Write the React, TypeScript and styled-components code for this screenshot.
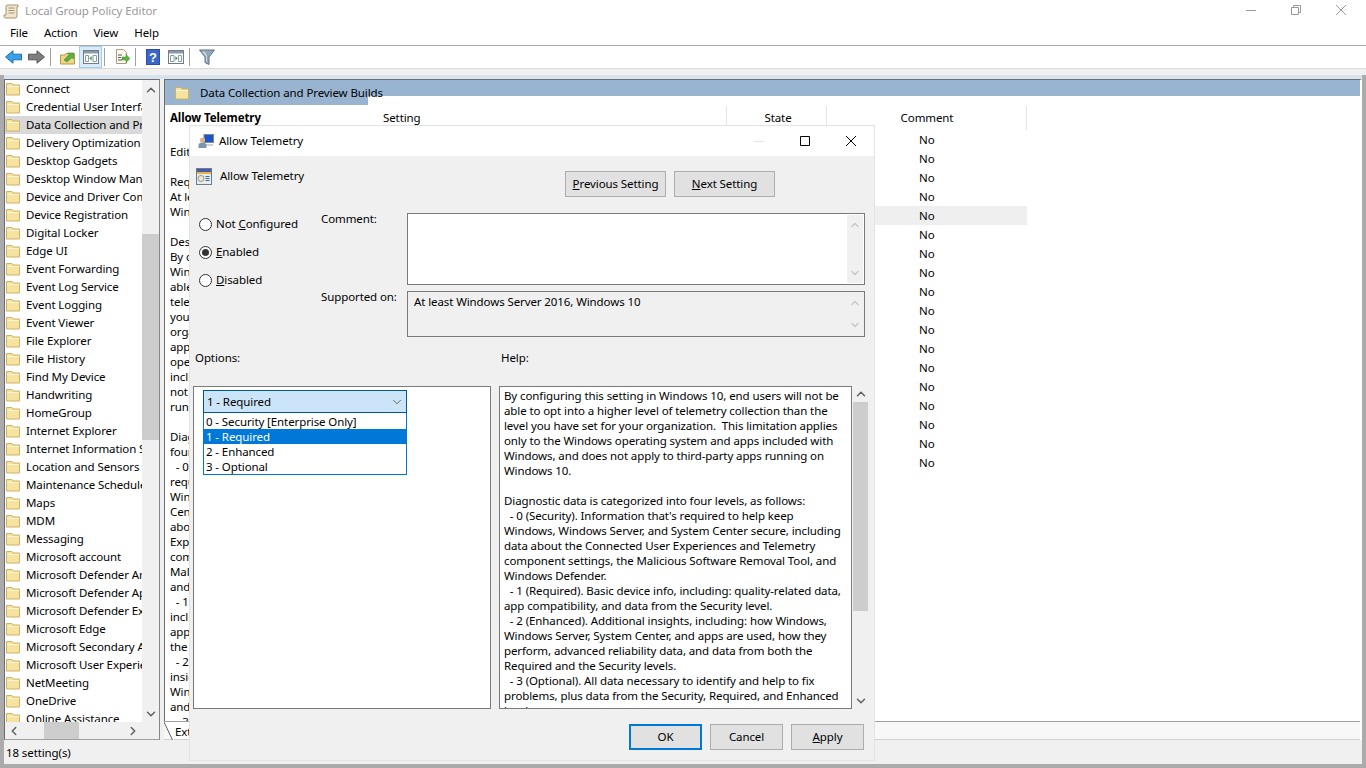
import styled, { createGlobalStyle } from "styled-components";
import { ChevronUp, ChevronDown, ChevronLeft, ChevronRight } from "lucide-react";

const FONT = `"Noto Sans", "Open Sans", sans-serif`;

const folders = [
  "Connect", "Credential User Interface", "Data Collection and Preview Builds", "Delivery Optimization",
  "Desktop Gadgets", "Desktop Window Manager", "Device and Driver Compatibility", "Device Registration",
  "Digital Locker", "Edge UI", "Event Forwarding", "Event Log Service", "Event Logging", "Event Viewer",
  "File Explorer", "File History", "Find My Device", "Handwriting", "HomeGroup", "Internet Explorer",
  "Internet Information Services", "Location and Sensors", "Maintenance Scheduler", "Maps", "MDM", "Messaging",
  "Microsoft account", "Microsoft Defender Antivirus", "Microsoft Defender Application Guard",
  "Microsoft Defender Exploit Guard", "Microsoft Edge", "Microsoft Secondary Authentication Factor",
  "Microsoft User Experience Virtualization", "NetMeeting", "OneDrive", "Online Assistance",
];

const extendedLines = [
  "", "Edit policy setting", "", "Requirements:", "At least Windows Server 2016,", "Windows 10", "",
  "Description:", "By configuring this setting in", "Windows 10, end users will not be",
  "able to opt into a higher level of", "telemetry collection than the level", "you have set for your",
  "organization.  This limitation", "applies only to the Windows", "operating system and apps",
  "included with Windows, and does", "not apply to third-party apps", "running on Windows 10.", "",
  "Diagnostic data is categorized into", "four levels, as follows:", "  - 0 (Security). Information that's",
  "required to help keep Windows,", "Windows Server, and System", "Center secure, including data",
  "about the Connected User", "Experiences and Telemetry", "component settings, the",
  "Malicious Software Removal Tool,", "and Windows Defender.", "  - 1 (Required). Basic device info,",
  "including: quality-related data,", "app compatibility, and data from", "the Security level.",
  "  - 2 (Enhanced). Additional", "insights, including: how Windows,", "Windows Server, System Center,",
  "and apps are used, how they", "  - 3 (Optional).",
];

const helpText = `By configuring this setting in Windows 10, end users will not be
able to opt into a higher level of telemetry collection than the
level you have set for your organization.  This limitation applies
only to the Windows operating system and apps included with
Windows, and does not apply to third-party apps running on
Windows 10.

Diagnostic data is categorized into four levels, as follows:
  - 0 (Security). Information that's required to help keep
Windows, Windows Server, and System Center secure, including
data about the Connected User Experiences and Telemetry
component settings, the Malicious Software Removal Tool, and
Windows Defender.
  - 1 (Required). Basic device info, including: quality-related data,
app compatibility, and data from the Security level.
  - 2 (Enhanced). Additional insights, including: how Windows,
Windows Server, System Center, and apps are used, how they
perform, advanced reliability data, and data from both the
Required and the Security levels.
  - 3 (Optional). All data necessary to identify and help to fix
problems, plus data from the Security, Required, and Enhanced
levels.`;

const Global = createGlobalStyle`
  html, body { margin: 0; padding: 0; height: 100%; overflow: hidden; background: #fff; }
  body { font-family: ${FONT}; font-size: 11.5px; letter-spacing: -0.1px; color: #000; }
  * { box-sizing: border-box; }
`;

const Page = styled.div`
  position: relative;
  width: 1366px;
  height: 768px;
  display: flex;
  flex-direction: column;
  overflow: hidden;
  background: #f0f0f0;
`;
const TitleBar = styled.div`
  height: 23px;
  flex: none;
  background: #fff;
  display: flex;
  align-items: center;
  padding-left: 3px;
  color: #999;
`;
const TitleText = styled.span`
  margin: 0 0 2px 6px;
  flex: 1;
`;
const WinButtons = styled.div`
  display: flex;
  align-items: flex-start;
  gap: 35px;
  height: 23px;
  padding-top: 5px;
  margin-right: 20px;
`;
const MenuBar = styled.div`
  height: 23px;
  flex: none;
  background: #fff;
  display: flex;
  align-items: center;
  gap: 16px;
  padding: 0 0 3px 10px;
  border-bottom: 1px solid #ababab;
`;
const ToolBar = styled.div`
  height: 23px;
  flex: none;
  background: #fff;
  display: flex;
  align-items: center;
  padding-left: 2px;
  border-bottom: 1px solid #d8d8d8;
`;
const ToolButton = styled.div<{ $active?: boolean }>`
  width: 23px;
  height: 22px;
  display: flex;
  align-items: center;
  justify-content: center;
  background: ${(p) => (p.$active ? "#d9ebf9" : "transparent")};
  border: 1px solid ${(p) => (p.$active ? "#a6cdec" : "transparent")};
`;
const ToolSep = styled.div`
  width: 1px;
  height: 18px;
  background: #a0a0a0;
  margin: 0 5px 0 2px;
`;
const Band = styled.div`
  height: 6px;
  flex: none;
  background: #f0f0f0;
`;
const ChildFrame = styled.div`
  flex: 1;
  min-height: 0;
  display: flex;
  flex-direction: column;
  border: solid #ababab;
  border-width: 0 4px 4px;
`;
const BlueBand = styled.div`
  height: 4px;
  flex: none;
  background: #d6e4f0;
`;
const Main = styled.div`
  flex: 1;
  min-height: 0;
  display: flex;
  background: #f0f0f0;
`;
const TreePane = styled.div`
  width: 156px;
  flex: none;
  display: flex;
  flex-direction: column;
  background: #fff;
  border: 1px solid #6d6d6d;
  border-right-color: #828790;
  border-bottom-color: #a0a0a0;
`;
const TreeBody = styled.div`
  flex: 1;
  min-height: 0;
  display: flex;
`;
const TreeList = styled.div`
  flex: 1;
  min-width: 0;
  overflow: hidden;
`;
const TreeRow = styled.div<{ $selected?: boolean }>`
  height: 18px;
  display: flex;
  align-items: center;
  gap: 6px;
  padding-left: 1px;
  white-space: nowrap;
  overflow: hidden;
  background: ${(p) => (p.$selected ? "#d9d9d9" : "transparent")};
`;
const TreeLabel = styled.span`
  margin-bottom: 2px;
`;
const VScroll = styled.div`
  width: 17px;
  flex: none;
  display: flex;
  flex-direction: column;
  align-items: center;
  padding: 3px 0 1px;
  background: #f0f0f0;
  color: #606060;
`;
const VThumb = styled.div`
  width: 17px;
  height: 206px;
  flex: none;
  margin: 137px 0 auto;
  background: #cdcdcd;
`;
const HScroll = styled.div`
  height: 17px;
  flex: none;
  display: flex;
  align-items: center;
  background: #f0f0f0;
  color: #606060;
  padding: 0 19px 0 2px;
`;
const HThumb = styled.div`
  width: 35px;
  height: 17px;
  margin-left: 23px;
  margin-right: auto;
  background: #cdcdcd;
`;
const Splitter = styled.div`
  width: 4px;
  flex: none;
`;
const DetailPane = styled.div`
  flex: 1;
  min-width: 0;
  display: flex;
  flex-direction: column;
  background: #fff;
  border: solid #6d6d6d;
  border-width: 1px 2px 0 1px;
  border-right-color: #fff;
`;
const DetailHead = styled.div`
  height: 25px;
  flex: none;
  background: linear-gradient(#99b4d1 16px, #fff 16px);
`;
const HeadTab = styled.div`
  width: 203px;
  height: 25px;
  display: flex;
  align-items: center;
  gap: 11px;
  padding-left: 10px;
  white-space: nowrap;
  background: linear-gradient(225deg, transparent 10px, #99b4d1 10px);
`;
const DetailBody = styled.div`
  flex: 1;
  min-height: 0;
  display: flex;
  overflow: hidden;
`;
const Extended = styled.div`
  width: 213px;
  flex: none;
  padding: 4px 0 0 5px;
  white-space: pre;
  overflow: hidden;
`;
const ExtTitle = styled.div`
  font-weight: 700;
  line-height: 18px;
  margin-bottom: 2px;
`;
const ExtLine = styled.div`
  height: 15px;
  line-height: 15px;
`;
const ListView = styled.div`
  flex: 1;
`;
const ListHead = styled.div`
  height: 24px;
  margin-top: 1px;
  display: flex;
`;
const HeadCell = styled.div<{ $w: number; $pad: number; $center?: boolean }>`
  width: ${(p) => p.$w}px;
  flex: none;
  line-height: 24px;
  padding-left: ${(p) => p.$pad}px;
  text-align: ${(p) => (p.$center ? "center" : "left")};
  border-right: 1px solid #e5e5e5;
`;
const ListRow = styled.div<{ $selected?: boolean }>`
  height: 19px;
  line-height: 19px;
  width: 649px;
  padding-left: 541px;
  background: ${(p) => (p.$selected ? "#efefef" : "transparent")};
`;
const TabStrip = styled.div`
  height: 19px;
  flex: none;
  display: flex;
  background: #f8f8f8;
  border-top: 1px solid #a0a0a0;
  border-bottom: 1px solid #d0d0d0;
  margin-left: -1px;
`;
const TabLabel = styled.div`
  width: 70px;
  padding-left: 1px;
  line-height: 19px;
  background: #fff;
`;
const StatusBar = styled.div`
  height: 24px;
  flex: none;
  background: #f0f0f0;
  padding: 1px 0 0 2px;
  line-height: 24px;
`;

/* dialog floats over the editor window */
const Dialog = styled.div`
  position: absolute;
  left: 189px;
  top: 125px;
  width: 686px;
  height: 636px;
  background: #f0f0f0;
  border: 1px solid #e3e3e3;
  display: flex;
  flex-direction: column;
`;
const DlgTitle = styled.div`
  height: 30px;
  flex: none;
  background: #fff;
  display: flex;
  align-items: center;
  padding-left: 8px;
  gap: 5px;
`;
const DlgTitleText = styled.span`
  flex: 1;
  margin-bottom: 2px;
`;
const DlgWinButtons = styled.div`
  display: flex;
  align-items: center;
  gap: 36px;
  margin-right: 18px;
`;
const DlgBody = styled.div`
  flex: 1;
  min-height: 0;
  display: flex;
  flex-direction: column;
  padding: 0 9px 0 3px;
`;
const TopRow = styled.div`
  height: 51px;
  flex: none;
  display: flex;
`;
const PolicyName = styled.div`
  width: 372px;
  display: flex;
  gap: 8px;
  padding: 12px 0 0 3px;
`;
const NavButtons = styled.div`
  display: flex;
  gap: 8px;
  padding-top: 15px;
`;
const Btn = styled.div<{ $w: number; $default?: boolean }>`
  width: ${(p) => p.$w}px;
  height: 26px;
  display: flex;
  align-items: center;
  justify-content: center;
  padding-bottom: 2px;
  white-space: pre;
  background: #e1e1e1;
  border: ${(p) => (p.$default ? "2px solid #0078d7" : "1px solid #adadad")};
`;
const Mnemonic = styled.span`
  text-decoration: underline;
`;
const MidRow = styled.div`
  height: 131px;
  flex: none;
  display: flex;
`;
const Radios = styled.div`
  width: 129px;
  display: flex;
  flex-direction: column;
  gap: 11px;
  padding: 9px 0 0 6px;
`;
const RadioRow = styled.div`
  height: 17px;
  display: flex;
  align-items: center;
  gap: 4px;
`;
const RadioLabel = styled.span`
  margin-bottom: 2px;
`;
const RadioDot = styled.div<{ $on?: boolean }>`
  width: 13px;
  height: 13px;
  border-radius: 50%;
  border: 1px solid #333;
  background: #fff;
  display: flex;
  align-items: center;
  justify-content: center;
  &::after {
    content: "";
    display: ${(p) => (p.$on ? "block" : "none")};
    width: 7px;
    height: 7px;
    border-radius: 50%;
    background: #333;
  }
`;
const Fields = styled.div`
  flex: 1;
  display: grid;
  grid-template-columns: 86px 458px;
  grid-template-rows: 72px 46px;
  row-gap: 6px;
  padding-top: 6px;
`;
const FieldLabel = styled.div<{ $shift: number }>`
  margin-top: ${(p) => p.$shift}px;
`;
const FieldBox = styled.div<{ $grey?: boolean }>`
  display: flex;
  justify-content: space-between;
  background: ${(p) => (p.$grey ? "#f0f0f0" : "#fff")};
  border: 1px solid #7a7a7a;
`;
const FieldText = styled.div`
  padding: 2px 6px;
`;
const FieldScroll = styled.div`
  width: 16px;
  margin: 1px;
  display: flex;
  flex-direction: column;
  justify-content: space-between;
  align-items: center;
  padding: 4px 0;
  background: #f0f0f0;
  color: #c4c4c4;
`;
const LabelRow = styled.div`
  height: 48px;
  flex: none;
  display: flex;
  padding: 12px 0 0 2px;
`;
const LabelLeft = styled.div`
  width: 306px;
`;
const PanesRow = styled.div`
  height: 323px;
  flex: none;
  display: flex;
  gap: 8px;
`;
const OptionsBox = styled.div`
  width: 298px;
  flex: none;
  background: #fff;
  border: 1px solid #7a7a7a;
`;
const ComboHead = styled.div`
  margin: 3px 0 0 9px;
  width: 204px;
  height: 23px;
  display: flex;
  align-items: center;
  justify-content: space-between;
  padding: 0 2px 0 3px;
  background: #cce4f7;
  border: 1px solid #005499;
`;
const ComboList = styled.div`
  margin-left: 9px;
  width: 204px;
  padding-top: 1px;
  background: #fff;
  border: 1px solid #0078d7;
  border-top: 0;
`;
const ComboItem = styled.div<{ $selected?: boolean }>`
  height: 15px;
  line-height: 15px;
  padding-left: 2px;
  color: ${(p) => (p.$selected ? "#fff" : "#000")};
  background: ${(p) => (p.$selected ? "#0078d7" : "transparent")};
`;
const HelpWrap = styled.div`
  width: 370px;
  flex: none;
  display: flex;
`;
const HelpBox = styled.div`
  width: 353px;
  flex: none;
  background: #fff;
  border: 1px solid #7a7a7a;
  padding: 1px 4px;
  white-space: pre;
  line-height: 15px;
  overflow: hidden;
`;
const HelpScroll = styled.div`
  width: 17px;
  flex: none;
  display: flex;
  flex-direction: column;
  align-items: center;
  padding: 1px 0;
  background: #f0f0f0;
  color: #606060;
`;
const HelpThumb = styled.div`
  flex: none;
  width: 15px;
  height: 209px;
  margin: 1px 0 auto;
  background: #cdcdcd;
`;
const Footer = styled.div`
  flex: 1;
  display: flex;
  justify-content: flex-end;
  gap: 8px;
  padding: 15px 1px 0 0;
`;

const FolderIcon = () => (
  <svg width="14" height="14" viewBox="0 0 14 14" style={{ flex: "none" }}>
    <path d="M.5 13V1.5h5.5l1 1.5h6.500v10z" fill="#f7e3a0" stroke="#cdb26a" />
    <path d="M1 4h12v1H1z" fill="#fdf6d4" />
  </svg>
);

const BackIcon = ({ color, flip }: { color: string; flip?: boolean }) => (
  <svg width="17" height="14" viewBox="0 0 17 14" style={{ transform: flip ? "scaleX(-1)" : undefined }}>
    <path d="M.5 7 8 .8v3.4h8.500v5.600H8v3.400z" fill={color} stroke={color === "#3aa1e8" ? "#1a6fb5" : "#555"} />
  </svg>
);

const PaneIcon = ({ flip }: { flip?: boolean }) => (
  <svg width="16" height="14" viewBox="0 0 16 14" style={{ transform: flip ? "scaleX(-1)" : undefined }}>
    <rect x=".5" y=".5" width="15" height="13" fill="#fff" stroke="#6d7d8c" />
    <rect x="1" y="1" width="14" height="2.500" fill="#8a9aa8" />
    <path d="M2.500 5.500h3v6h-3zM10 5.500h3.500v6H10z" fill="none" stroke="#8a9aa8" />
    <path d="M8.600 6v4.600L6.300 8.300z" fill="#3a9a3a" />
  </svg>
);

const UpFolderIcon = () => (
  <svg width="16" height="15" viewBox="0 0 16 15">
    <path d="M.5 5V14h14V3.500H6L5 5z" fill="#f0d688" stroke="#b59a45" />
    <path d="M4 10 9 4.500 7.500 3h6v6L12 7.500 7 12z" fill="#5fb040" stroke="#3d8a2a" strokeWidth=".6" />
  </svg>
);

const ExportIcon = () => (
  <svg width="16" height="16" viewBox="0 0 16 16">
    <path d="M2.500.5h7l3 3v11h-10z" fill="#fdfbf0" stroke="#a89d80" />
    <path d="M4 6h4M4 8.500h3M4 11h4" stroke="#555" />
    <path d="M8 8h4V5.500L16 9.500 12 13.500V11H8z" fill="#5db53c" stroke="#3d8a2a" strokeWidth=".5" />
  </svg>
);

const HelpIcon = () => (
  <svg width="14" height="16" viewBox="0 0 14 16">
    <rect width="14" height="16" fill="#2c4fa8" />
    <rect x="1" y="1" width="12" height="14" fill="#3b66c9" />
    <text x="7" y="13" fontSize="13" fontWeight="700" textAnchor="middle" fill="#fff" fontFamily="Liberation Sans">?</text>
  </svg>
);

const FilterIcon = () => (
  <svg width="16" height="16" viewBox="0 0 16 16">
    <path d="M.5 1h15L10 8v7.500L6 13.500V8z" fill="#8fa8ba" stroke="#5f7485" />
    <path d="M3 2.500h3L8 7v6L7 12.500V7.500z" fill="#c7d6e0" />
  </svg>
);

const ScrollIcon = () => (
  <svg width="16" height="16" viewBox="0 0 16 16">
    <path d="M4 1h11v2h-1v9a2 2 0 0 1-2 2H2a2 2 0 0 1-1-1.800V11h2V2z" fill="#f0e6cf" stroke="#a8936c" />
    <path d="M5.500 4h6M5.500 6.500h6M5.500 9h6" stroke="#a8936c" />
  </svg>
);

const ComputerIcon = () => (
  <svg width="16" height="16" viewBox="0 0 16 16">
    <rect x="6" y="1.500" width="9.500" height="8" fill="#1a55c8" stroke="#7b8a99" />
    <rect x="7" y="11" width="8" height="2" fill="#c9d0d6" />
    <circle cx="4.500" cy="7" r="2.600" fill="#d9b48a" />
    <path d="M.5 15v-2.500c0-2 1.500-3 4-3s4 1 4 3V15z" fill="#7a93b0" />
  </svg>
);

const PolicyIcon = () => (
  <svg width="16" height="17" viewBox="0 0 16 17">
    <rect x=".5" y=".5" width="15" height="16" fill="#e6ecef" stroke="#6b7f88" />
    <rect x="1" y="1" width="14" height="3" fill="#4a5aa8" />
    <rect x="1" y="4" width="14" height="2" fill="#e3b54a" />
    <circle cx="5" cy="10.500" r="3" fill="#f2e9c4" stroke="#8a9aa0" />
    <path d="M9.500 8.500h4M9.500 10.500h4M9.500 12.500h4" stroke="#3d6f8a" />
  </svg>
);

const MinGlyph = ({ color }: { color: string }) => (
  <svg width="10" height="10" viewBox="0 0 10 10">
    <path d="M0 5.500h10" stroke={color} />
  </svg>
);

const RestoreGlyph = () => (
  <svg width="10" height="10" viewBox="0 0 10 10" fill="none" stroke="#999">
    <path d="M.5 2.500h7v7h-7zM2.500 2.500v-2h7v7h-2" />
  </svg>
);

const MaxGlyph = () => (
  <svg width="10" height="10" viewBox="0 0 10 10" fill="none" stroke="#000">
    <path d="M.5.5h9v9h-9z" />
  </svg>
);

const CloseGlyph = ({ color }: { color: string }) => (
  <svg width="10" height="10" viewBox="0 0 10 10" fill="none" stroke={color}>
    <path d="M0 0l10 10M10 0L0 10" />
  </svg>
);

const TabSlant = () => (
  <svg width="10" height="18" viewBox="0 0 10 18" style={{ flex: "none", display: "block" }}>
    <path d="M10 18H8.500L0 0h10z" fill="#fff" />
    <path d="M0 0l8.500 18" stroke="#606060" fill="none" />
  </svg>
);

const App = () => {
  return (
    <Page>
      <Global />
      <TitleBar>
        <ScrollIcon />
        <TitleText>Local Group Policy Editor</TitleText>
        <WinButtons>
          <MinGlyph color="#999" />
          <RestoreGlyph />
          <CloseGlyph color="#999" />
        </WinButtons>
      </TitleBar>
      <MenuBar>
        <span>File</span>
        <span>Action</span>
        <span>View</span>
        <span>Help</span>
      </MenuBar>
      <ToolBar>
        <ToolButton><BackIcon color="#3aa1e8" /></ToolButton>
        <ToolButton><BackIcon color="#7f7f7f" flip /></ToolButton>
        <ToolSep />
        <ToolButton><UpFolderIcon /></ToolButton>
        <ToolButton $active><PaneIcon /></ToolButton>
        <ToolSep />
        <ToolButton><ExportIcon /></ToolButton>
        <ToolSep />
        <ToolButton><HelpIcon /></ToolButton>
        <ToolButton><PaneIcon flip /></ToolButton>
        <ToolSep />
        <ToolButton><FilterIcon /></ToolButton>
      </ToolBar>
      <Band />
      <ChildFrame>
        <BlueBand />
        <Main>
          <TreePane>
            <TreeBody>
              <TreeList>
                {folders.map((name, i) => (
                  <TreeRow key={name} $selected={i === 2}>
                    <FolderIcon />
                    <TreeLabel>{name}</TreeLabel>
                  </TreeRow>
                ))}
              </TreeList>
              <VScroll>
                <ChevronUp size={14} strokeWidth={2.5} />
                <VThumb />
                <ChevronDown size={14} strokeWidth={2.5} />
              </VScroll>
            </TreeBody>
            <HScroll>
              <ChevronLeft size={14} strokeWidth={2.5} />
              <HThumb />
              <ChevronRight size={14} strokeWidth={2.5} />
            </HScroll>
          </TreePane>
          <Splitter />
          <DetailPane>
            <DetailHead>
              <HeadTab>
                <FolderIcon />
                Data Collection and Preview Builds
              </HeadTab>
            </DetailHead>
            <DetailBody>
              <Extended>
                <ExtTitle>Allow Telemetry</ExtTitle>
                {extendedLines.map((line, i) => (
                  <ExtLine key={i}>{line}</ExtLine>
                ))}
              </Extended>
              <ListView>
                <ListHead>
                  <HeadCell $w={349} $pad={5}>Setting</HeadCell>
                  <HeadCell $w={100} $pad={3} $center>State</HeadCell>
                  <HeadCell $w={200} $pad={1} $center>Comment</HeadCell>
                </ListHead>
                {Array.from({ length: 18 }, (_, i) => (
                  <ListRow key={i} $selected={i === 4}>No</ListRow>
                ))}
              </ListView>
            </DetailBody>
            <TabStrip>
              <TabSlant />
              <TabLabel>Extended</TabLabel>
            </TabStrip>
          </DetailPane>
        </Main>
        <StatusBar>18 setting(s)</StatusBar>
      </ChildFrame>

      <Dialog>
        <DlgTitle>
          <ComputerIcon />
          <DlgTitleText>Allow Telemetry</DlgTitleText>
          <DlgWinButtons>
            <MinGlyph color="#e6e6e6" />
            <MaxGlyph />
            <CloseGlyph color="#000" />
          </DlgWinButtons>
        </DlgTitle>
        <DlgBody>
          <TopRow>
            <PolicyName>
              <PolicyIcon />
              Allow Telemetry
            </PolicyName>
            <NavButtons>
              <Btn $w={101}><Mnemonic>P</Mnemonic>revious Setting</Btn>
              <Btn $w={101}><Mnemonic>N</Mnemonic>ext Setting</Btn>
            </NavButtons>
          </TopRow>
          <MidRow>
            <Radios>
              <RadioRow><RadioDot /><RadioLabel>Not <Mnemonic>C</Mnemonic>onfigured</RadioLabel></RadioRow>
              <RadioRow><RadioDot $on /><RadioLabel><Mnemonic>E</Mnemonic>nabled</RadioLabel></RadioRow>
              <RadioRow><RadioDot /><RadioLabel><Mnemonic>D</Mnemonic>isabled</RadioLabel></RadioRow>
            </Radios>
            <Fields>
              <FieldLabel $shift={-2}>Comment:</FieldLabel>
              <FieldBox>
                <FieldText />
                <FieldScroll>
                  <ChevronUp size={12} strokeWidth={2.5} />
                  <ChevronDown size={12} strokeWidth={2.5} />
                </FieldScroll>
              </FieldBox>
              <FieldLabel $shift={-2}>Supported on:</FieldLabel>
              <FieldBox $grey>
                <FieldText>At least Windows Server 2016, Windows 10</FieldText>
                <FieldScroll>
                  <ChevronUp size={12} strokeWidth={2.5} />
                  <ChevronDown size={12} strokeWidth={2.5} />
                </FieldScroll>
              </FieldBox>
            </Fields>
          </MidRow>
          <LabelRow>
            <LabelLeft>Options:</LabelLeft>
            <span>Help:</span>
          </LabelRow>
          <PanesRow>
            <OptionsBox>
              <ComboHead>
                1 - Required
                <ChevronDown size={14} strokeWidth={1.2} color="#333" />
              </ComboHead>
              <ComboList>
                <ComboItem>0 - Security [Enterprise Only]</ComboItem>
                <ComboItem $selected>1 - Required</ComboItem>
                <ComboItem>2 - Enhanced</ComboItem>
                <ComboItem>3 - Optional</ComboItem>
              </ComboList>
            </OptionsBox>
            <HelpWrap>
              <HelpBox>{helpText}</HelpBox>
              <HelpScroll>
                <ChevronUp size={14} strokeWidth={2.5} />
                <HelpThumb />
                <ChevronDown size={14} strokeWidth={2.5} />
              </HelpScroll>
            </HelpWrap>
          </PanesRow>
          <Footer>
            <Btn $w={73} $default>OK</Btn>
            <Btn $w={73}>Cancel</Btn>
            <Btn $w={73}><span><Mnemonic>A</Mnemonic>pply</span></Btn>
          </Footer>
        </DlgBody>
      </Dialog>
    </Page>
  );
};

export default App;
